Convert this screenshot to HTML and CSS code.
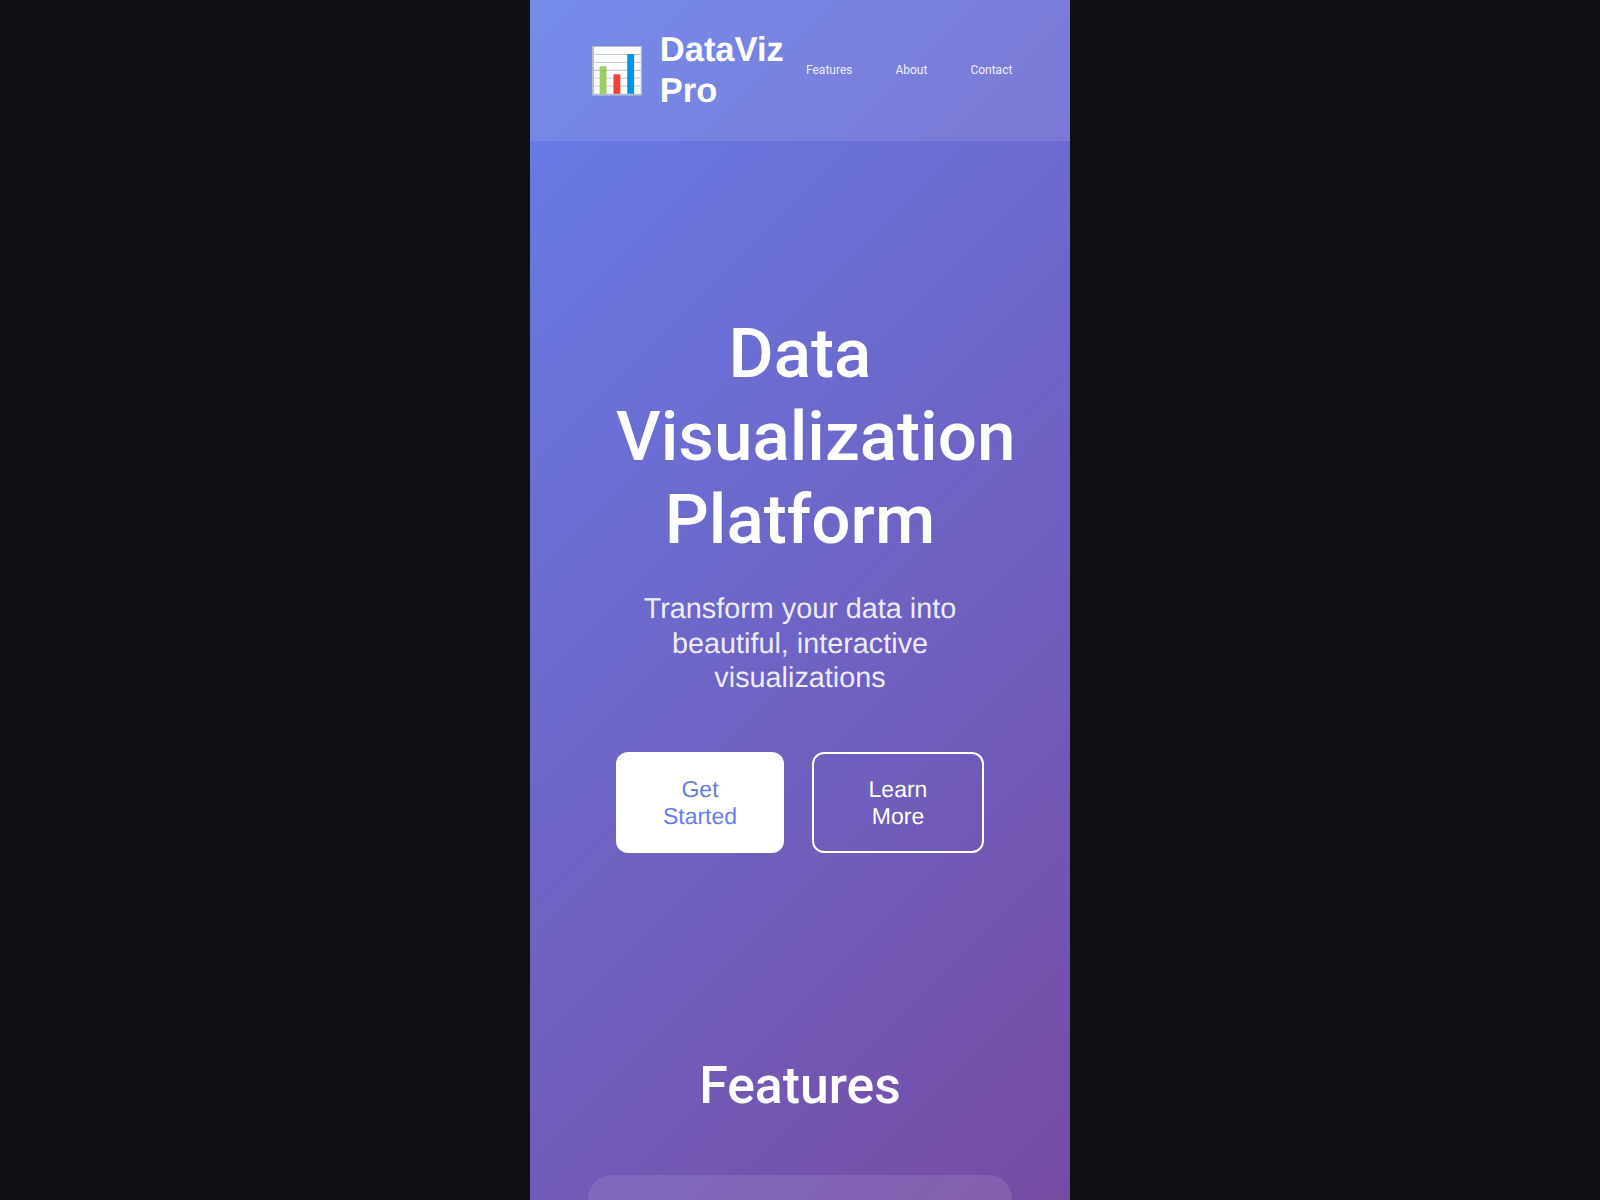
FILE: index.html
```html
<!DOCTYPE html>
<html lang="en">
<head>
<meta charset="utf-8">
<title>DataViz Pro</title>
<link rel="stylesheet" href="styles.css">
</head>
<body>
<div class="phone">
  <header class="site-header">
    <div class="logo">
      <span class="logo-icon">📊</span>
      <span class="logo-text">DataViz Pro</span>
    </div>
    <nav class="nav">
      <a href="#features">Features</a>
      <a href="#about">About</a>
      <a href="#contact">Contact</a>
    </nav>
  </header>
  <section class="hero">
    <h1>Data Visualization Platform</h1>
    <p class="subtitle">Transform your data into beautiful, interactive visualizations</p>
    <div class="actions">
      <a class="btn btn-primary" href="#start">Get Started</a>
      <a class="btn btn-secondary" href="#more">Learn More</a>
    </div>
  </section>
  <section class="features">
    <h2>Features</h2>
    <div class="card"></div>
  </section>
</div>
</body>
</html>
```

FILE: styles.css
```css
* { box-sizing: border-box; margin: 0; padding: 0; }
html, body { height: 100%; overflow: hidden; }
html { background: #0e1015; }
body {
  display: flex;
  justify-content: center;
  font-family: "Liberation Sans", Arial, sans-serif;
  color: #fff;
}
.phone {
  width: 540px;
  height: 1200px;
  overflow: hidden;
  flex: none;
  background: linear-gradient(135deg, #667eea 0%, #764ba2 100%);
}
.site-header {
  height: 141px;
  padding: 0 58px;
  display: flex;
  align-items: center;
  justify-content: space-between;
  background: rgba(255, 255, 255, 0.1);
}
.logo { display: flex; align-items: center; gap: 15px; width: 217px; flex: none; margin-left: 1px; }
.logo-icon { font-size: 44.8px; line-height: 1; font-family: "Noto Color Emoji", sans-serif; margin-top: 1px; }
.logo-text { font-weight: 700; font-size: 34.5px; line-height: 41px; text-rendering: geometricPrecision; }
.nav { display: flex; gap: 43px; font-family: Roboto, sans-serif; font-size: 12px; margin-top: -1px; }
.nav a { color: rgba(255, 255, 255, .9); text-decoration: none; }
.hero { padding: 171px 86px 0; text-align: center; }
.hero h1 { font-family: Roboto, sans-serif; font-weight: 500; font-size: 69.2px; line-height: 83px; }
.subtitle { margin-top: 31px; font-size: 28.8px; line-height: 34.5px; color: rgba(255, 255, 255, .9); text-rendering: geometricPrecision; }
.actions { margin-top: 56px; display: flex; justify-content: center; gap: 28px; }
.btn { width: 168px; height: 101px; border-radius: 12px; display: flex; align-items: center; justify-content: center; text-align: center; font-size: 23px; line-height: 27px; text-decoration: none; padding: 2px 40px 0; flex: none; text-rendering: geometricPrecision; }
.btn-primary { background: #fff; color: #667eea; }
.btn-secondary { width: 172px; border: 2px solid #fff; color: #fff; }
.features { margin-top: 203px; padding: 0 58px; }
.features h2 { text-align: center; font-family: Roboto, sans-serif; font-weight: 500; font-size: 51.7px; line-height: 60px; }
.card { margin-top: 59px; height: 300px; border-radius: 24px; background: rgba(255, 255, 255, 0.1); }
```
